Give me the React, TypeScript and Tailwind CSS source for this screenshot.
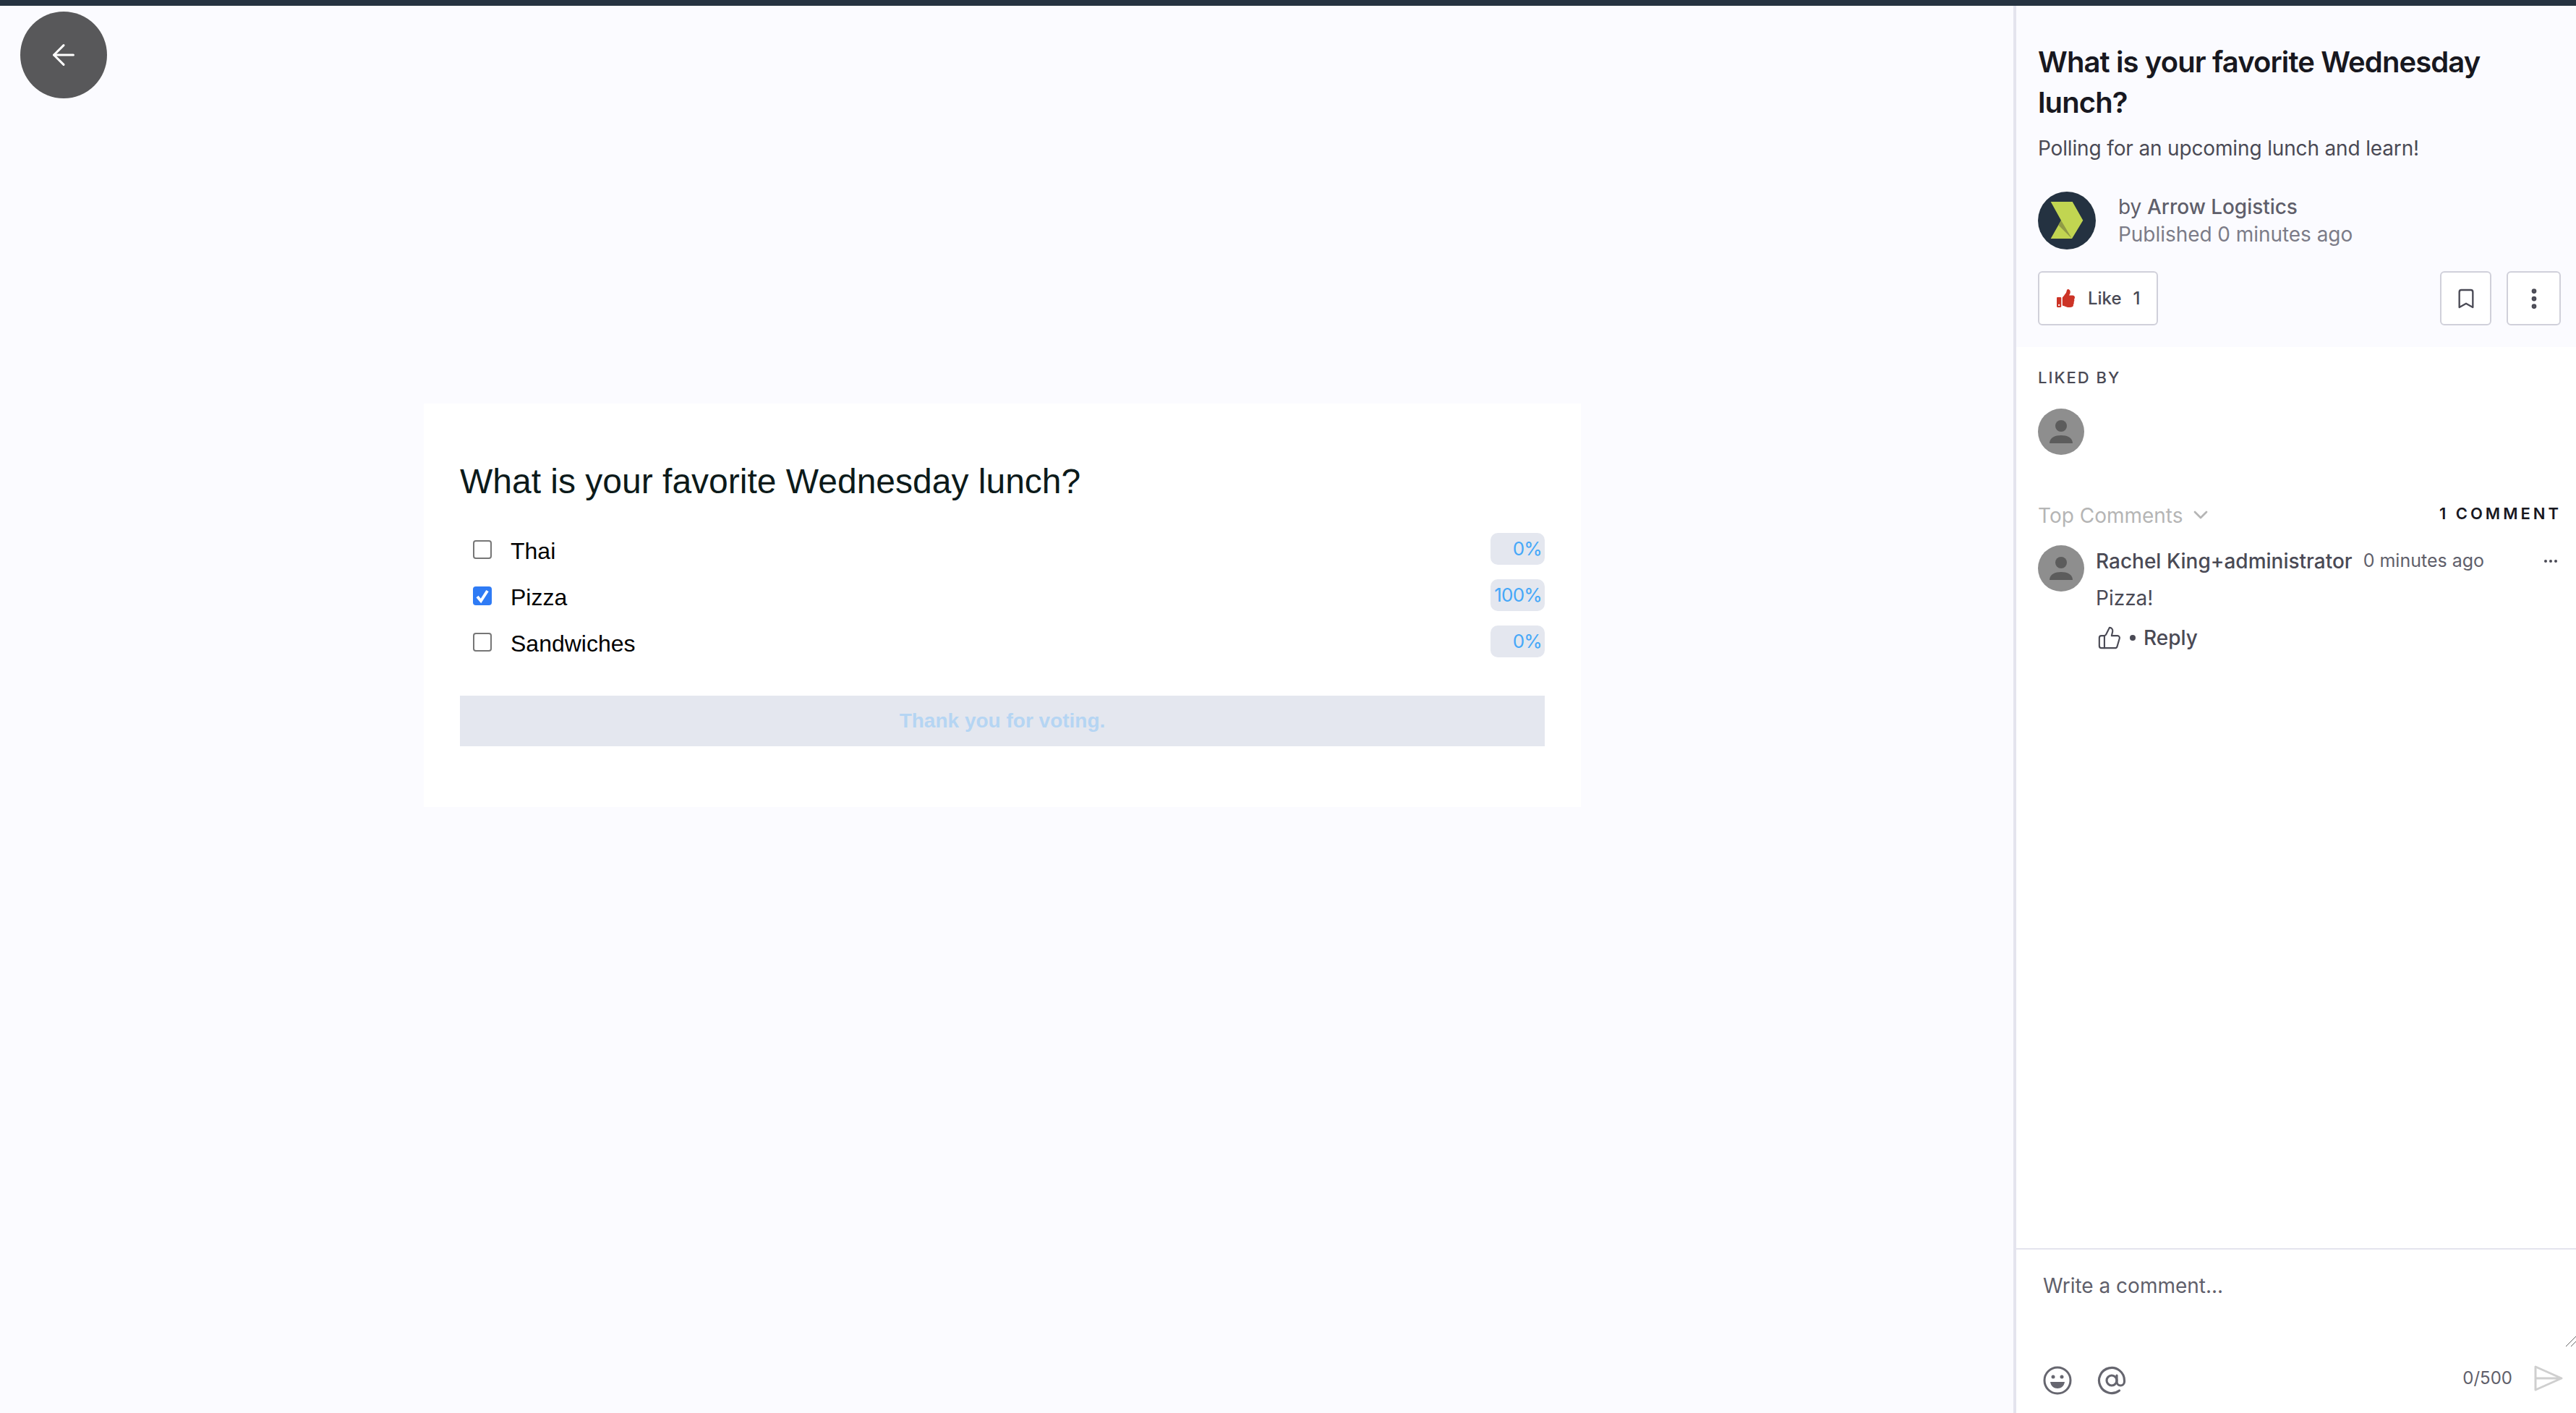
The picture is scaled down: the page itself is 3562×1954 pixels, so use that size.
import { AtSign, Bookmark, ChevronDown, EllipsisVertical, ThumbsUp, ArrowLeft } from "lucide-react";
import { FaThumbsUp } from "react-icons/fa";

const options = [
  { label: "Thai", percent: "0%", checked: false },
  { label: "Pizza", percent: "100%", checked: true },
  { label: "Sandwiches", percent: "0%", checked: false },
];

function PersonAvatar() {
  return (
    <svg viewBox="0 0 64 64" className="w-[64px] h-[64px] shrink-0">
      <circle cx="32" cy="32" r="32" fill="#8e8e8e" />
      <circle cx="32" cy="24" r="8" fill="#5c5c5c" />
      <path d="M16 48 C16 40 24 37 32 37 C40 37 48 40 48 48 Z" fill="#5c5c5c" />
    </svg>
  );
}

function Logo() {
  return (
    <svg viewBox="0 0 80 80" className="w-[80px] h-[80px] shrink-0">
      <circle cx="40" cy="40" r="40" fill="#243241" />
      <polygon points="17.7,14 47.7,14 62.3,39.7 47,65 17.7,65 32,39.7" fill="#c1d551" />
      <polygon points="32,39.7 47,65 28.5,46.5" fill="#8f9a45" />
    </svg>
  );
}

function PollOption({ label, percent, checked }: { label: string; percent: string; checked: boolean }) {
  return (
    <div className="flex items-center h-[64px] pl-[18px]">
      {checked ? (
        <div className="w-[26px] h-[26px] rounded-[4px] bg-[#2f7bf5] flex items-center justify-center">
          <svg viewBox="0 0 26 26" className="w-[26px] h-[26px]">
            <path d="M6 14 L11 20 L20 6" fill="none" stroke="#fff" strokeWidth="4" />
          </svg>
        </div>
      ) : (
        <div className="w-[26px] h-[26px] rounded-[4px] border-2 border-[#767676] bg-white" />
      )}
      <span className="ml-[26px] flex-1 text-[32px] leading-[64px] text-black mt-[3px]">{label}</span>
      <span className="w-[75px] h-[44px] mt-[-3px] rounded-[10px] bg-[#e4e7ef] text-right pr-[4px] text-[26px] tracking-[-0.8px] leading-[44px] text-[#46a8f8] font-[Inter,sans-serif]">
        {percent}
      </span>
    </div>
  );
}

export default function App() {
  return (
    <div className="h-screen flex flex-col bg-[#fbfbff] overflow-hidden font-[Inter,sans-serif]">
      <div className="h-[8px] bg-[#263341] shrink-0" />
      <div className="flex flex-1 min-h-0">
        <main className="relative flex-1 pl-[586px] pt-[550px]">
          <button className="absolute left-[28px] top-[8px] w-[120px] h-[120px] rounded-full bg-[#58585a] flex items-center justify-center text-white">
            <ArrowLeft size={46} strokeWidth={1.6} />
          </button>
          <div className="w-[1600px] h-[558px] bg-white px-[50px] pt-[80px] font-['Liberation_Sans',sans-serif]">
            <h1 className="text-[48px] leading-[56px] text-[#0c1a1a]">What is your favorite Wednesday lunch?</h1>
            <div className="mt-[34px] flex flex-col">
              {options.map((o) => (
                <PollOption key={o.label} {...o} />
              ))}
            </div>
            <div className="mt-[42px] h-[70px] bg-[#e4e7ef] flex items-center justify-center text-[28px] font-bold text-[#b5d5f3]">
              Thank you for voting.
            </div>
          </div>
        </main>

        <aside className="w-[778px] shrink-0 border-l-4 border-[#e4e4ee] flex flex-col bg-white">
          <section className="h-[472px] shrink-0 bg-[#fbfbff] pl-[30px] pr-[21px] pt-[50px]">
            <h2 className="text-[40px] leading-[56px] font-semibold tracking-[-0.9px] text-[#18181f] pr-[60px]">
              What is your favorite Wednesday lunch?
            </h2>
            <p className="mt-[15px] text-[28px] leading-[40px] tracking-[-0.15px] text-[#4a4a55]">Polling for an upcoming lunch and learn!</p>
            <div className="mt-[40px] flex items-center">
              <Logo />
              <div className="ml-[31px] text-[28px] leading-[38px] tracking-[-0.05px]">
                <div className="text-[#5f5f6b]">
                  by <span className="font-medium">Arrow Logistics</span>
                </div>
                <div className="text-[#7c7c88]">Published 0 minutes ago</div>
              </div>
            </div>
            <div className="mt-[30px] flex items-center">
              <button className="w-[166px] h-[75px] rounded-[6px] border-2 border-[#d0d0da] bg-white flex items-center pl-[24px] text-[24px] text-[#4a4a55] font-medium">
                <FaThumbsUp size={25} className="text-[#cc3326]" />
                <span className="ml-[18px]">Like</span>
                <span className="ml-[16px]">1</span>
              </button>
              <button className="ml-auto w-[71px] h-[75px] rounded-[6px] border-2 border-[#d0d0da] bg-white flex items-center justify-center text-[#4a4a55]">
                <Bookmark size={32} strokeWidth={1.75} />
              </button>
              <button className="ml-[21px] w-[75px] h-[75px] rounded-[6px] border-2 border-[#d0d0da] bg-white flex items-center justify-center text-[#4a4a55]">
                <EllipsisVertical size={36} strokeWidth={2.5} />
              </button>
            </div>
          </section>

          <section className="flex-1 min-h-0 pl-[30px] pr-[24px]">
            <div className="mt-[28px] text-[22px] leading-[28px] font-medium tracking-[2px] text-[#4a4a55]">LIKED BY</div>
            <div className="mt-[29px]">
              <PersonAvatar />
            </div>
            <div className="mt-[64px] flex items-center justify-between">
              <div className="flex items-center text-[28px] leading-[40px] text-[#b5b5b5]">
                Top Comments
                <ChevronDown size={32} strokeWidth={2} className="ml-[8px] mt-[-2px]" />
              </div>
              <div className="text-[22px] leading-[28px] font-semibold tracking-[4px] mr-[-4px] text-[#18181f] mt-[-6px]">1 COMMENT</div>
            </div>
            <div className="mt-[21px] flex">
              <PersonAvatar />
              <div className="ml-[16px] flex-1">
                <div className="flex items-center h-[40px] mt-[2px]">
                  <span className="text-[28px] font-medium text-[#4a4a55]">Rachel King+administrator</span>
                  <span className="ml-[15px] text-[25px] text-[#5f5f6b]">0 minutes ago</span>
                  <span className="ml-auto flex gap-[3px] pr-[2px]">
                    <span className="w-[4px] h-[4px] rounded-full bg-[#4a4a55]" />
                    <span className="w-[4px] h-[4px] rounded-full bg-[#4a4a55]" />
                    <span className="w-[4px] h-[4px] rounded-full bg-[#4a4a55]" />
                  </span>
                </div>
                <div className="mt-[11px] text-[28px] leading-[40px] text-[#4a4a55]">Pizza!</div>
                <div className="mt-[14px] flex items-center text-[#4a4a55]">
                  <ThumbsUp size={34} strokeWidth={1.5} className="ml-[2px]" />
                  <span className="ml-[11px] w-[8px] h-[8px] rounded-full bg-[#4a4a55]" />
                  <span className="ml-[11px] text-[28px] font-medium">Reply</span>
                </div>
              </div>
            </div>
          </section>

          <section className="relative h-[228px] shrink-0 border-t-2 border-[#e4e4ee] pl-[37px] pr-[18px]">
            <div className="pt-[30px] text-[28px] leading-[40px] text-[#5f5f6b]">Write a comment...</div>
            <svg viewBox="0 0 14 14" className="absolute right-0 top-[120px] w-[14px] h-[14px]">
              <path d="M0 14 L14 0 M7 14 L14 7" stroke="#666" strokeWidth="1" />
            </svg>
            <div className="mt-[90px] flex items-center">
              <svg viewBox="0 0 40 40" className="w-[40px] h-[40px]">
                <circle cx="20" cy="20" r="18" fill="none" stroke="#66666f" strokeWidth="3" />
                <circle cx="14" cy="15" r="2.5" fill="#66666f" />
                <circle cx="26" cy="15" r="2.5" fill="#66666f" />
                <path d="M10 22 H30 C29 28 25 31 20 31 C15 31 11 28 10 22 Z" fill="#66666f" />
              </svg>
              <AtSign size={42} strokeWidth={1.8} className="ml-[34px] text-[#66666f]" />
              <span className="ml-auto text-[24px] text-[#5f5f6b] mt-[-6px]">0/500</span>
              <svg viewBox="0 0 40 36" className="ml-[30px] w-[40px] h-[36px] mt-[-6px]">
                <path d="M2 2 L38 18 L2 34 Z M2 18 H38" fill="none" stroke="#cfcfcf" strokeWidth="3" strokeLinejoin="round" />
              </svg>
            </div>
          </section>
        </aside>
      </div>
    </div>
  );
}
